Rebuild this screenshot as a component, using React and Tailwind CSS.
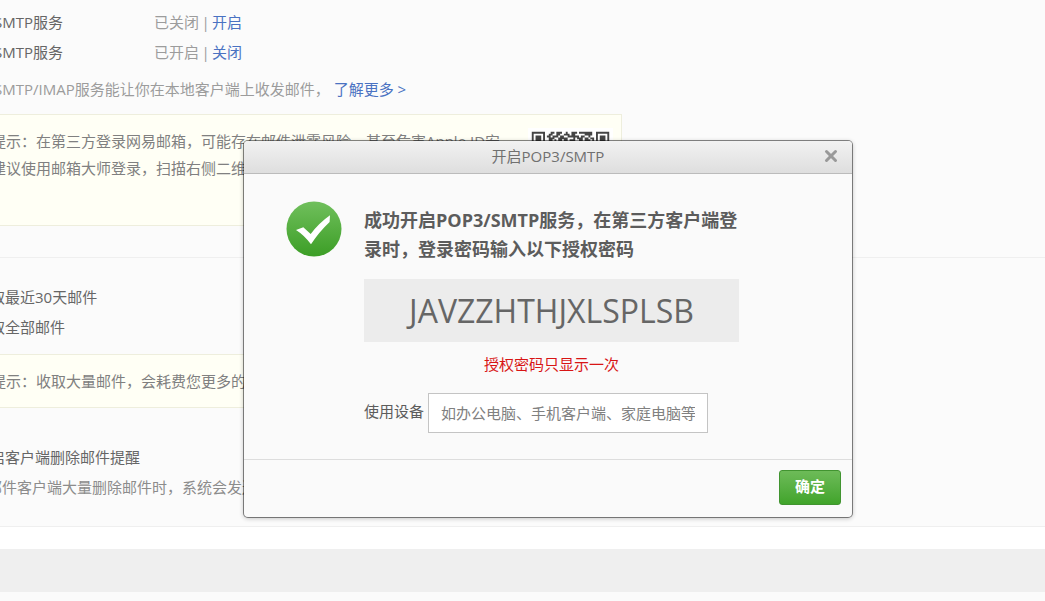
import { X } from 'lucide-react';

const QR_SIZE = 41;
const QR_HEAD = [
  '11111110001101110010011101111111001111111',
  '10000010011001100111011000001111001000001',
  '10111010110111011001111110110010001011101',
  '10111010011100111110001011101101101011101',
  '10111010011010110110111001101110101011101',
  '10000010110101001011010110100101001000001',
  '11111110101010101010101010101010101111111',
];

function qrCells() {
  const cells = [];
  for (let y = 0; y < QR_SIZE; y++) {
    for (let x = 0; x < QR_SIZE; x++) {
      const on = y < 7 ? QR_HEAD[y][x] === '1' : (x * 7 + y * 11 + x * y * 3) % 5 < 2;
      if (on) cells.push(`M${x} ${y}h1v1h-1z`);
    }
  }
  return cells.join('');
}

function QrCode() {
  return (
    <svg
      viewBox="-2 -2 45 45"
      role="img"
      aria-label="二维码"
      className="size-[85px] shrink-0 bg-white"
    >
      <path d={qrCells()} fill="#444" />
    </svg>
  );
}

function SuccessIcon() {
  return (
    <svg viewBox="0 0 56 56" className="size-14 shrink-0" aria-hidden="true">
      <defs>
        <linearGradient id="success" x1="0" y1="0" x2="0" y2="1">
          <stop offset="0" stopColor="#70bf5c" />
          <stop offset="1" stopColor="#3c9e26" />
        </linearGradient>
      </defs>
      <circle cx="28" cy="28" r="27.5" fill="url(#success)" />
      <path d="M10 29 L17.3 26.2 L24.7 33 Q33 22 44 14.3 L43.6 21 Q33 31 25 43.3 Q18 34 10 29 Z" fill="#fff" />
    </svg>
  );
}

function ServiceRow({ status, action }) {
  return (
    <div className="flex">
      <span className="w-[160px] text-[#666]">SMTP服务</span>
      <span>{status}</span>
      <span className="w-[13px] text-center">|</span>
      <a href="#" className="text-[#4a72c2]">{action}</a>
    </div>
  );
}

function Tip({ children }) {
  return (
    <div className="flex justify-between border border-[#eeeedd] bg-[#fffff5] pt-[13px] pr-2 pb-3 pl-[6px] leading-[27px] text-[#808080]">
      {children}
    </div>
  );
}

function SettingsPage() {
  return (
    <main className="-ml-4 whitespace-nowrap text-[15px] leading-[30px] text-[#9c9c9c]">
      <section className="border-b border-[#efefef] pt-[7px] pb-[31px]">
        <div className="pl-[10px]">
          <ServiceRow status="已关闭" action="开启" />
          <ServiceRow status="已开启" action="关闭" />
          <p className="mt-[7px]">
            SMTP/IMAP服务能让你在本地客户端上收发邮件，
            <a href="#" className="ml-1 text-[#4a72c2]">了解更多 &gt;</a>
          </p>
        </div>
        <div className="mt-[10px] max-w-[638px]">
          <Tip>
            <p>
              提示：在第三方登录网易邮箱，可能存在邮件泄露风险，甚至危害Apple ID安
              <br />
              建议使用邮箱大师登录，扫描右侧二维
            </p>
            <QrCode />
          </Tip>
        </div>
      </section>

      <section className="border-b border-[#efefef] py-6">
        <div className="pl-[6px] text-[#666]">
          <p>取最近30天邮件</p>
          <p>取全部邮件</p>
        </div>
        <div className="mt-3 max-w-[638px]">
          <Tip>
            <p>提示：收取大量邮件，会耗费您更多的</p>
          </Tip>
        </div>
        <div className="mt-[34px]">
          <p className="pl-[6px] text-[#666]">启客户端删除邮件提醒</p>
          <p className="pl-[3px] text-[#8c8c8c]">邮件客户端大量删除邮件时，系统会发送</p>
        </div>
      </section>
    </main>
  );
}

function AuthCodeDialog() {
  return (
    <div
      role="dialog"
      aria-labelledby="dialog-title"
      className="w-[610px] rounded-[5px] border border-black/45 bg-[#fafafa] bg-clip-padding text-[15px] text-[#5c5c5c] shadow-[0_1px_4px_rgba(0,0,0,0.2)]"
    >
      <header className="relative rounded-t-[4px] border-b border-[#bbb] bg-linear-to-b from-[#f2f2f2] to-[#dedede] pb-[2px] text-center leading-[30px] text-[#707070]">
        <h1 id="dialog-title">开启POP3/SMTP</h1>
        <button type="button" aria-label="关闭" className="absolute top-[6px] right-3 text-[#999]">
          <X className="size-[18px]" strokeWidth={4} />
        </button>
      </header>

      <div className="flex gap-[22px] pt-[27px] pb-[26px] pl-[42px]">
        <SuccessIcon />
        <div className="w-[375px]">
          <h2 className="mt-[5px] text-lg leading-[29px] font-bold whitespace-nowrap">
            成功开启POP3/SMTP服务，在第三方客户端登
            <br />
            录时，登录密码输入以下授权密码
          </h2>
          <p className="mt-[15px] bg-[#ececec] text-center text-[32px] leading-[63px] text-[#666]">
            JAVZZHTHJXLSPLSB
          </p>
          <p className="mt-2 text-center leading-7 text-[#d81515]">授权密码只显示一次</p>
          <div className="mt-[15px] flex items-center gap-1">
            <label htmlFor="device" className="pb-1">使用设备</label>
            <input
              id="device"
              type="text"
              placeholder="如办公电脑、手机客户端、家庭电脑等"
              className="h-10 w-[280px] border border-[#c4c4c4] bg-white px-3 placeholder:text-[#808080]"
            />
          </div>
        </div>
      </div>

      <footer className="flex justify-end border-t border-[#ddd] pt-[10px] pr-[11px] pb-3">
        <button
          type="button"
          className="h-[35px] w-[62px] rounded-[3px] border border-[#419430] bg-linear-to-b from-[#6dbb58] to-[#40a42a] pb-[2px] font-bold text-white"
        >
          确定
        </button>
      </footer>
    </div>
  );
}

export default function App() {
  return (
    <div className="relative min-h-screen overflow-hidden bg-[#fbfbfb] font-['Open_Sans','Noto_Sans_CJK_SC',sans-serif]">
      <SettingsPage />
      <div className="h-[22px] bg-white" />
      <div className="h-[43px] bg-[#efefef]" />
      <div className="absolute inset-0 flex items-start justify-center pt-[140px] pl-[51px]">
        <AuthCodeDialog />
      </div>
    </div>
  );
}
